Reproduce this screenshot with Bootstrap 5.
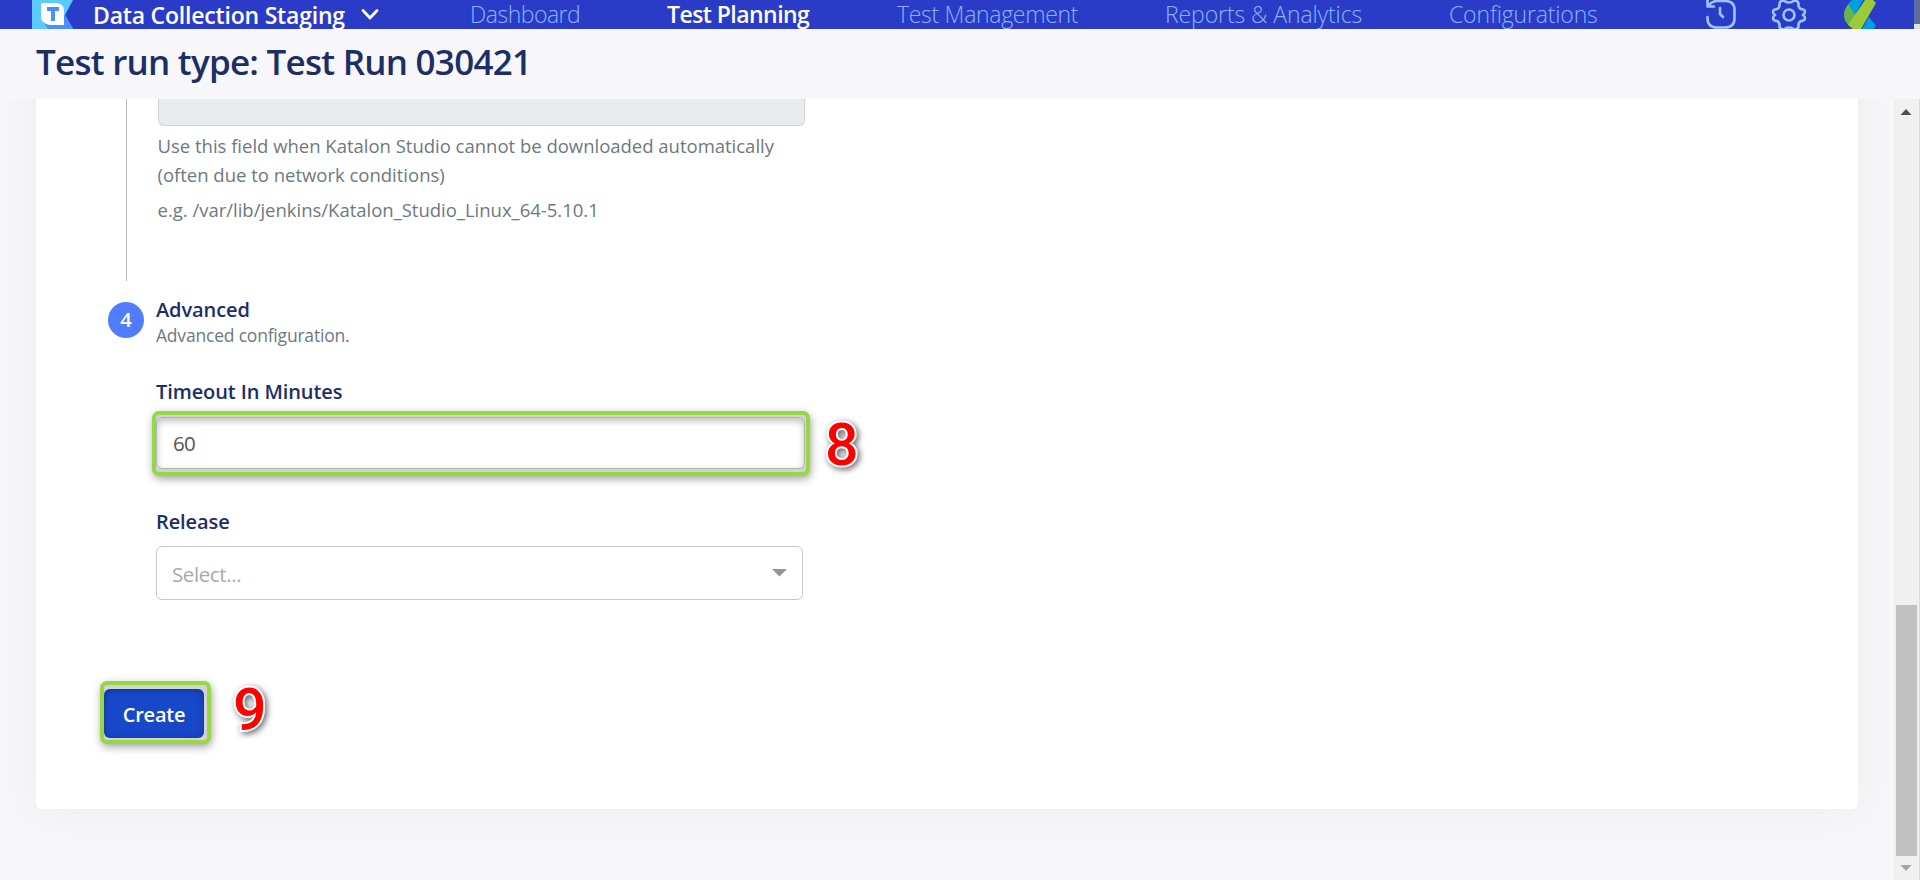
<!DOCTYPE html>
<html lang="en">
<head>
<meta charset="utf-8">
<title>Test Run 030421</title>
<link href="https://cdn.jsdelivr.net/npm/bootstrap@5.3.0/dist/css/bootstrap.min.css" rel="stylesheet">
<style>
body{font-family:"Open Sans","Noto Sans",sans-serif;background:#f7f7fa;height:880px;overflow:hidden;color:#1b2f66}
.topbar{height:29px;background:#2a3cc7;line-height:29px;color:#8ab3fa;padding-left:32px;font-size:23px}
.brand-name{width:268px;margin-left:20px;font-weight:600;color:#fff;letter-spacing:-.2px;line-height:31px;height:29px}
.chev{width:18px;margin-right:91px}
.menu{display:grid;grid-template-columns:197px 230px 268px 284px 257px;font-weight:300;letter-spacing:-.3px}
.menu a{color:#8ab3fa;text-decoration:none;white-space:nowrap}
.menu a.current{color:#fff;font-weight:600;letter-spacing:-.55px}
.old-scroll{width:6px;height:29px;background:linear-gradient(#5c6c9c 24px,#dfe2ee 24px)}
.page-title{height:70px;line-height:66px;padding-left:36px;font-size:35px;font-weight:600;letter-spacing:-.75px;color:#1b2f66;margin:0}
.scroller{height:781px;overflow:hidden}
.sheet{width:1822px;height:770px;margin:-60px 0 0 36px;padding:60px 0 0 68px;background:#fff;border-radius:6px;box-shadow:0 0 42px rgba(90,95,110,.065)}
.rail{width:22px;margin-left:22px;border-left:1px solid #bdbdbd;height:182px}
.step-body{width:647px;margin-left:10px}
.locked{height:27px;background:#e8ecef;border:1px solid #ced4da;border-top:0;border-radius:0 0 6px 6px}
.hint{font-size:18.5px;line-height:29px;color:#6e7881;letter-spacing:-.01px;white-space:nowrap;margin-left:-.5px}
.step-no{width:36px;height:36px;border-radius:50%;background:#4f7dfd;color:#fff;font-size:20px;font-weight:600;margin:6px 0 0 4px}
.step-title{font-size:20px;line-height:27px;font-weight:600;height:26px;letter-spacing:-.1px}
.step-sub{font-size:17.5px;line-height:27px;height:26px;color:#6e7881;letter-spacing:-.2px}
.lbl{font-size:20px;line-height:27px;height:26px;font-weight:600;letter-spacing:-.1px;margin-left:52px}
.callout{border:4px solid #96d83f;border-radius:7px;background:#d3d3d6;box-shadow:1px 3px 8px rgba(0,0,0,.36)}
.time-box{width:658px;height:65px;margin:7px 0 0 48px}
.time-input{height:52px;margin:2px 1px 0 0;border:1px solid #b3b3b8;border-radius:6px;background:#fff;box-shadow:inset 0 3px 7px rgba(0,0,0,.26);padding-left:16px;line-height:51px;font-size:20.5px;color:#555;letter-spacing:-.6px}
.select-box{width:647px;height:54px;margin:12px 0 0 52px;border:1px solid #c8c8c8;border-radius:6px;padding:0 15px;font-size:20.5px;color:#aaa;letter-spacing:-.4px}
.create-box{width:111px;height:63px;margin:81px 0 0 -4px;padding:4px 3px 0 0}
.create-btn{width:100px;height:49px;border:0;border-radius:6px;background:#1848ca;color:#fff;font-size:20px;font-weight:600;letter-spacing:-.25px;padding:2px 0 0;box-shadow:inset 0 1px 7px rgba(0,0,40,.35);display:block;margin:0}
.num{font-family:Roboto,sans-serif;font-size:59px;font-weight:500;line-height:60px;color:#f00;-webkit-text-stroke:4px #fff;paint-order:stroke fill;filter:drop-shadow(2px 2px 3px rgba(0,0,0,.6))}
.track{width:26px;background:#f0f0f1;border-right:1px solid #dcdce0;padding:10px 0 9px}
.thumb{width:21px;height:251px;background:#c1c1c1;margin-left:2px}
</style>
</head>
<body>
<header class="topbar d-flex">
  <svg width="41" height="29" viewBox="0 0 41 29"><path fill="#5bcbff" d="M0 0h41L33 15l8 14H0z"/><path fill="#4b8ffb" d="M11 22l22-7 8 14H16z"/><path fill="#fff" d="M9 3h16q7 1 7 8v14H18q-9-1-9-9z"/><path fill="#4b8ffb" d="M15 7h12v4h-4v10h-4V11h-4z"/></svg>
  <div class="brand-name text-nowrap">Data Collection Staging</div>
  <svg class="chev" height="29" viewBox="0 0 18 29"><path d="M2 10.5l7 7.5 7-7.5" fill="none" stroke="#fff" stroke-width="2.8" stroke-linecap="round" stroke-linejoin="round"/></svg>
  <nav class="menu"><a href="#" style="letter-spacing:-.5px">Dashboard</a><a href="#" class="current">Test Planning</a><a href="#">Test Management</a><a href="#" style="letter-spacing:-.1px">Reports &amp; Analytics</a><a href="#" style="letter-spacing:-.15px">Configurations</a></nav>
  <svg width="33" height="29" viewBox="0 0 33 29" fill="none" stroke="#9dc3fd" stroke-width="2.6" stroke-linecap="round" stroke-linejoin="round"><path d="M1.500 17v1q0 9.500 9.500 9.500h8q9.500 0 9.500-9.500v-8Q28.500 1 19.500 1H11Q6 1 2.500 5.500M1.500 0v6.500H8M14 8v6l3 3"/></svg>
  <svg class="ms-auto" style="margin-right:37px" width="36" height="29" viewBox="0 0 36 29" fill="none" stroke="#9dc3fd" stroke-width="2.600" stroke-linejoin="round"><circle cx="18" cy="15" r="5.500"/><path d="M13 .5q2 2 5 2t5-2q4 0 4.500 3Q27 7.500 30 9q4 .3 4 3 0 1.500-2 3 2 1.500 2 3 0 2.700-4 3-3 1.500-2.500 5.500-.5 3-4.500 3-2-2-5-2t-5 2q-4 0-4.500-3Q9 22.500 6 21q-4-.3-4-3 0-1.500 2-3-2-1.500-2-3 0-2.700 4-3 3-1.500 2.500-5.500.5-3 4.500-3z"/></svg>
  <svg style="margin-right:37px" width="33" height="29" viewBox="0 0 33 29"><path fill="#6cb543" d="M4.500 4Q0 9 0 15q0 6 4.500 10L13 14z"/><path fill="#00a0e0" d="M8 0h11l-8 15L4 4z"/><path fill="#00a0e0" d="M25 17l7 9-3 3H18z"/><path fill="#9bcb3a" d="M21 0h8l3 3-15 26H9l-5-4z"/></svg>
  <div class="old-scroll"></div>
</header>
<h1 class="page-title">Test run type: Test Run 030421</h1>
<div class="scroller d-flex">
  <main class="sheet flex-shrink-0">
    <div class="d-flex">
      <div class="rail"></div>
      <div class="step-body">
        <div class="locked"></div>
        <div class="hint" style="margin-top:5px">Use this field when Katalon Studio cannot be downloaded automatically<br>(often due to network conditions)</div>
        <div class="hint" style="margin-top:6px">e.g. /var/lib/jenkins/Katalon_Studio_Linux_64-5.10.1</div>
      </div>
    </div>
    <div class="d-flex" style="margin-top:15px">
      <div class="step-no d-flex align-items-center justify-content-center">4</div>
      <div style="margin-left:12px"><div class="step-title">Advanced</div><div class="step-sub">Advanced configuration.</div></div>
    </div>
    <div class="lbl" style="margin-top:30px">Timeout In Minutes</div>
    <div class="d-flex">
      <div class="callout time-box"><div class="time-input">60</div></div>
      <div class="num" style="margin:11px 0 -11px 15px">8</div>
    </div>
    <div class="lbl" style="margin-top:32px">Release</div>
    <div class="select-box d-flex align-items-center justify-content-between"><span style="padding-top:3px">Select...</span><svg width="15" height="8"><path fill="#949494" d="M0 0h15L7.500 7.500z"/></svg></div>
    <div class="d-flex">
      <div class="callout create-box"><button class="create-btn">Create</button></div>
      <div class="num" style="margin:80px 0 -12px 22px">9</div>
    </div>
  </main>
  <div class="track ms-auto d-flex flex-column">
    <svg width="24" height="6"><path fill="#505050" d="M6.500 6h11L12 0z"/></svg>
    <div class="thumb mt-auto"></div>
    <svg width="24" height="6" style="margin-top:9px"><path fill="#a3a3a3" d="M6.500 0h11L12 6z"/></svg>
  </div>
</div>
<script src="https://cdn.jsdelivr.net/npm/bootstrap@5.3.0/dist/js/bootstrap.bundle.min.js"></script>
</body>
</html>
